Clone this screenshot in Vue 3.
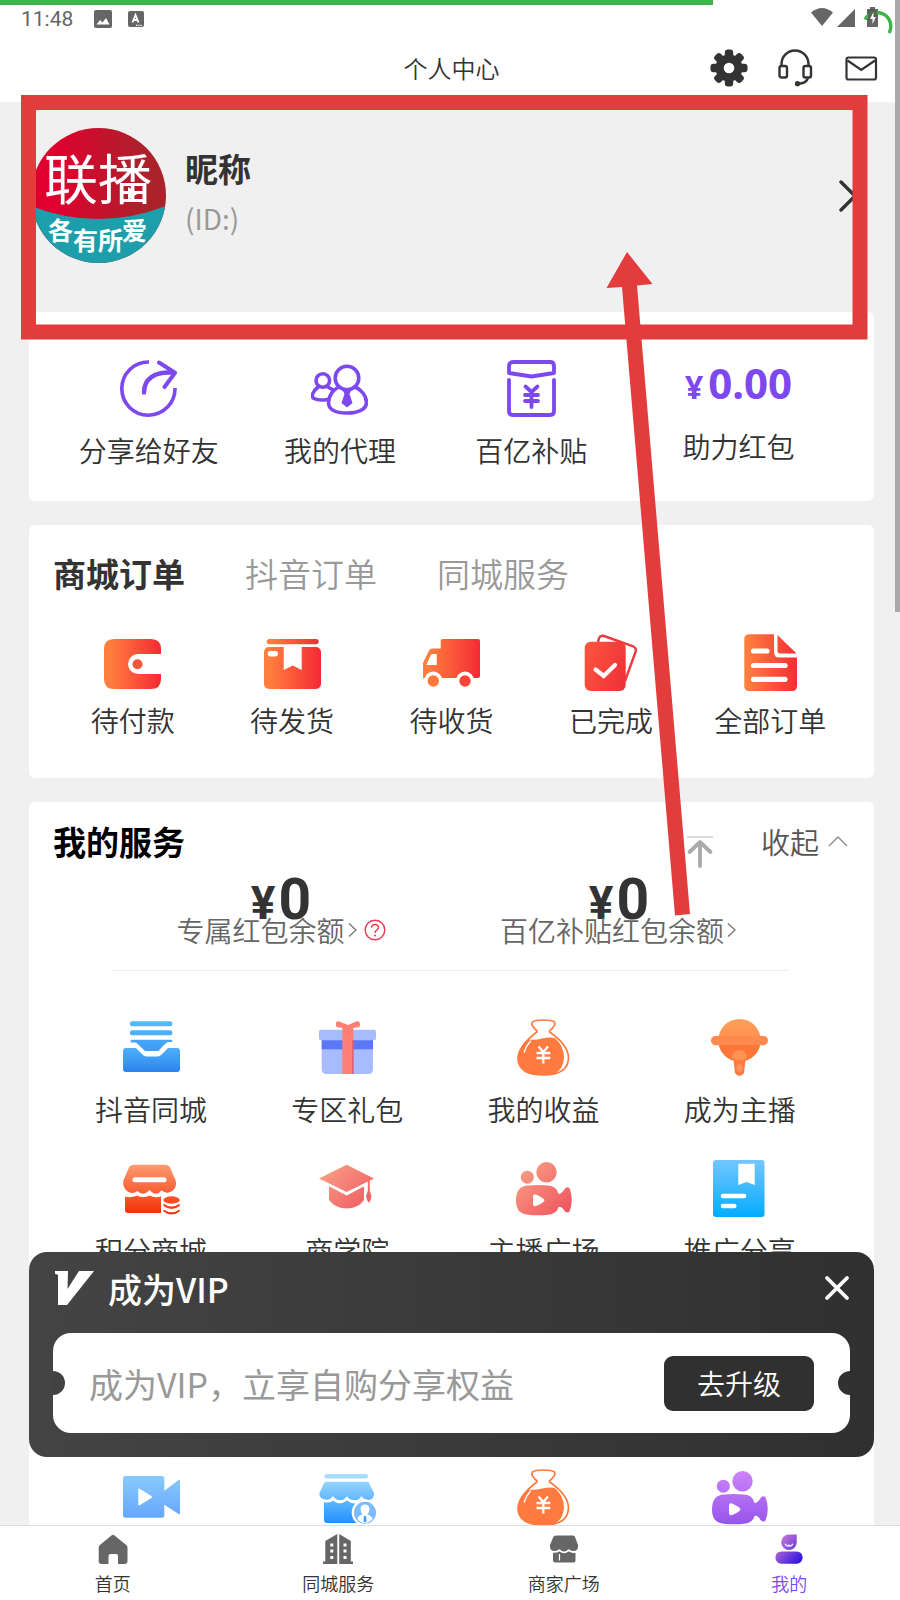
<template>
  <div class="app">
    <svg class="defs" width="0" height="0" aria-hidden="true">
      <defs>
        <linearGradient id="g-order" gradientUnits="userSpaceOnUse" x1="0" y1="0" x2="57" y2="0">
          <stop offset="0.1" stop-color="#ff7e3d" />
          <stop offset="1" stop-color="#f42a34" />
        </linearGradient>
        <linearGradient id="g-done" gradientUnits="userSpaceOnUse" x1="0" y1="0" x2="57" y2="20">
          <stop offset="0" stop-color="#ff5a3e" />
          <stop offset="1" stop-color="#ee2f38" />
        </linearGradient>
        <linearGradient id="g-blue" gradientUnits="userSpaceOnUse" x1="0" y1="0" x2="0" y2="57">
          <stop offset="0" stop-color="#58bdff" />
          <stop offset="1" stop-color="#2b7fea" />
        </linearGradient>
        <linearGradient id="g-tray" gradientUnits="userSpaceOnUse" x1="0" y1="28" x2="0" y2="54">
          <stop offset="0" stop-color="#4fb3fc" />
          <stop offset="1" stop-color="#2c80ea" />
        </linearGradient>
        <linearGradient id="g-book" gradientUnits="userSpaceOnUse" x1="0" y1="0" x2="0" y2="57">
          <stop offset="0" stop-color="#74c6ff" />
          <stop offset="1" stop-color="#04abff" />
        </linearGradient>
        <linearGradient id="g-video" gradientUnits="userSpaceOnUse" x1="0" y1="5" x2="0" y2="50">
          <stop offset="0" stop-color="#8accfd" />
          <stop offset="1" stop-color="#64a5fd" />
        </linearGradient>
        <linearGradient id="g-store" gradientUnits="userSpaceOnUse" x1="0" y1="4" x2="0" y2="54">
          <stop offset="0" stop-color="#aee3ff" />
          <stop offset="1" stop-color="#2191ff" />
        </linearGradient>
        <linearGradient id="g-mall" gradientUnits="userSpaceOnUse" x1="0" y1="4" x2="0" y2="54">
          <stop offset="0" stop-color="#fd9c72" />
          <stop offset="1" stop-color="#f23005" />
        </linearGradient>
        <linearGradient id="g-host" gradientUnits="userSpaceOnUse" x1="0" y1="0" x2="0" y2="57">
          <stop offset="0" stop-color="#ffa05c" />
          <stop offset="1" stop-color="#ff7438" />
        </linearGradient>
        <linearGradient id="g-coral" gradientUnits="userSpaceOnUse" x1="5" y1="5" x2="52" y2="52">
          <stop offset="0" stop-color="#f9a085" />
          <stop offset="1" stop-color="#ef5660" />
        </linearGradient>
        <linearGradient id="g-violet" gradientUnits="userSpaceOnUse" x1="0" y1="0" x2="0" y2="57">
          <stop offset="0" stop-color="#cf86fa" />
          <stop offset="1" stop-color="#9553ea" />
        </linearGradient>
        <linearGradient id="g-me" gradientUnits="userSpaceOnUse" x1="2" y1="4" x2="26" y2="26">
          <stop offset="0" stop-color="#cf80d8" />
          <stop offset="0.5" stop-color="#8a4fd6" />
          <stop offset="1" stop-color="#3a18e0" />
        </linearGradient>
        <linearGradient id="g-logo" x1="0" y1="0" x2="1" y2="0">
          <stop offset="0.15" stop-color="#e0002f" />
          <stop offset="0.85" stop-color="#ac222b" />
        </linearGradient>

        <symbol id="i-share" viewBox="0 0 57 57">
          <g fill="none" stroke="#7d48ee" stroke-width="4" stroke-linecap="round" stroke-linejoin="round">
            <path d="M29 2A26.6 26.6 0 1 0 55 28" stroke-width="3.6" stroke-linecap="butt" />
            <path d="M39 2.5L55 12.7L44.5 27" />
            <path d="M24 32.5C24 19 34 11.5 53 12.7" stroke-width="4.6" />
          </g>
        </symbol>
        <symbol id="i-agent" viewBox="0 0 57 57">
          <g fill="none" stroke="#7d48ee" stroke-width="3.6" stroke-linecap="round">
            <circle cx="36" cy="18" r="11.8" />
            <circle cx="11.8" cy="20.5" r="6.8" />
            <path d="M27 27.500C23 29.500 17.500 35 17.500 43C18 51 26 53 36 53S55 50 55.500 43C55.500 35 49.500 29.500 45 27.500" />
            <path d="M7 27C1 32 0 37 3 38.5Q8 41 16 39.5M17 27L22 30" />
          </g>
          <path d="M31 29H41L38.500 34L41.500 43L36 47.500L30.500 43L33.500 34Z" fill="#7d48ee" />
        </symbol>
        <symbol id="i-subsidy" viewBox="0 0 57 57">
          <g fill="none" stroke="#7d48ee" stroke-width="3.8" stroke-linecap="round" stroke-linejoin="round">
            <path d="M6 13V6Q6 2 10 2H47Q51 2 51 6V13L28.500 16.500Z" />
            <path d="M6 20V51Q6 55 10 55H47Q51 55 51 51V20" />
            <path d="M22.500 26.500L28.500 32L34.500 26.500M28.500 32V47M22 35H35M22 41H35" />
          </g>
        </symbol>

        <symbol id="i-pay" viewBox="0 0 57 57">
          <path d="M10 5H47Q57 5 57 15V20H34A10 10 0 0 0 34 40H57V45Q57 55 47 55H10Q0 55 0 45V15Q0 5 10 5Z" fill="url(#g-order)" />
          <circle cx="33.500" cy="30.200" r="5" fill="#f95339" />
        </symbol>
        <symbol id="i-ship" viewBox="0 0 57 57">
          <rect x="2.700" y="5" width="52" height="5.200" rx="2.600" fill="url(#g-order)" />
          <rect y="13" width="57" height="42" rx="5" fill="url(#g-order)" />
          <path d="M19.700 12H37.700V36L28.700 31.500L19.700 36Z" fill="#fff" />
          <rect x="3.700" y="17" width="10.300" height="5.500" rx="2.700" fill="#fff" />
        </symbol>
        <symbol id="i-receive" viewBox="0 0 57 57">
          <path d="M20 5H55Q57 5 57 7V42Q57 44 55 44H0V29L6 16.500Q7 14.500 9.500 14.500H17.700V7Q17.700 5 20 5Z" fill="url(#g-order)" />
          <path d="M13.700 20H9.500Q8.300 20 7.800 21L3.300 31H13.700Z" fill="#fff" />
          <circle cx="10.300" cy="46.500" r="9" fill="#fff" />
          <circle cx="42" cy="46.500" r="9" fill="#fff" />
          <circle cx="10.300" cy="47" r="5.700" fill="#ff773d" />
          <circle cx="42" cy="47" r="5.700" fill="#f94438" />
        </symbol>
        <symbol id="i-done" viewBox="0 0 57 57">
          <path d="M16 8L17 4Q18.500 1 22 2L50.500 12Q55 14 53.500 18L43 47" fill="none" stroke="#ee3a40" stroke-width="2.400" />
          <rect x="2.700" y="7.700" width="41" height="49.300" rx="6" fill="url(#g-done)" />
          <path d="M13.500 35.500L21.700 42L33 31" fill="none" stroke="#fff" stroke-width="4.200" stroke-linecap="round" />
        </symbol>
        <symbol id="i-all" viewBox="0 0 57 57">
          <path d="M7.300 0.300H32V18Q32 23.500 37 23.500H55V52Q55 57 50 57H7.300Q2.300 57 2.300 52V5.300Q2.300 0.300 7.300 0.300Z" fill="url(#g-order)" />
          <path d="M35.500 1L54.500 19.500H38Q35.500 19.500 35.500 17Z" fill="url(#g-order)" />
          <path d="M11.500 17H25M11.500 31.500H43M11.500 45.300H43" stroke="#fff" stroke-width="5.200" stroke-linecap="round" />
        </symbol>

        <symbol id="i-local" viewBox="0 0 57 57">
          <g fill="url(#g-blue)">
            <rect x="7" y="2.300" width="42.300" height="5" rx="2" />
            <rect x="7" y="11.300" width="42.300" height="5" rx="2" />
            <path d="M8.500 20.700H48Q49.500 20.700 49.300 23H45Q42 24 36 31.500Q35 32 34 32H22Q18 28 13 23.500H8Q6.500 22 8.500 20.700Z" />
          </g>
          <path d="M3 29H13L20 36Q22 37.500 24 37.500H34Q36 37.500 38 36L45 29H54Q57 29 57 32V50Q57 53 54 53H3Q0 53 0 50V32Q0 29 3 29Z" fill="url(#g-tray)" />
        </symbol>
        <symbol id="i-gift" viewBox="0 0 57 57">
          <path d="M2.700 21H54V50Q54 55 49 55H7.700Q2.700 55 2.700 50Z" fill="#a8bbff" />
          <rect x="2.700" y="21" width="51.300" height="9.300" fill="#5b78f6" />
          <rect y="10.700" width="57" height="10.600" rx="2" fill="#a8bbff" />
          <path d="M23.300 9L17.500 8Q15.500 2 19.500 2.200L29 6L37.500 2.200Q42.500 2 40.500 8L34.300 9V55H23.300Z" fill="#ff7f75" />
          <path d="M33.300 21V55H34.600V21Z" fill="#d95b6d" />
        </symbol>
        <symbol id="i-income" viewBox="0 0 57 57">
          <g fill="none" stroke="#ff7a3f" stroke-width="1.700">
            <path d="M22.500 12.500Q15 6 17.500 3Q20 1 28.500 1T39.500 3Q41.500 6 34 12.500" />
            <path d="M22.500 12.500Q3 27 3 40Q4 56 28.500 56T53.500 39Q53.500 26 34 12.500" />
          </g>
          <path d="M13 20.500Q20 21.500 27 19.500Q36 17.500 40.500 19.500Q49 28 49 38Q48 53 36 56H22Q4 55 3 39Q4 29 13 20.500Z" fill="#ff7a3f" />
          <path d="M15.500 22Q11 27 9.300 33" fill="none" stroke="#fff" stroke-width="1.400" stroke-linecap="round" />
          <path d="M23.500 27.500L28.300 33L33 27.500M28.300 33V44.500M21.500 34H35.300M21.500 39H35.300" fill="none" stroke="#fff" stroke-width="2.300" />
        </symbol>
        <symbol id="i-host" viewBox="0 0 57 57">
          <circle cx="28.500" cy="21.300" r="21.300" fill="url(#g-host)" />
          <rect y="17" width="57" height="9.300" rx="4.600" fill="#ff8a4d" />
          <path d="M8 26Q12 41 28.500 42.500Q45 41 49 26Z" fill="#ff7639" />
          <path d="M22.500 41H34.500L33 54Q31 57 28.500 57T24 54Z" fill="#ff7a42" />
          <path d="M21 39Q22 31 28.500 31T36 39Q28 44 21 39Z" fill="#ff9354" />
          <ellipse cx="28.500" cy="49" rx="3" ry="4" fill="#ff915c" />
        </symbol>
        <symbol id="i-mall" viewBox="0 0 57 57">
          <g fill="url(#g-mall)">
            <path d="M11 4.700H42Q45.500 4.700 47 7.500L52.500 20Q54.500 27 49 31Q44 34.500 38.500 30.500Q33 37 26.500 30Q20 37 14.500 31Q9 35 4 31Q-1 27 0.500 20L6 7.500Q7.500 4.700 11 4.700Z" />
            <path d="M2 36.700Q9 38 14 35.500Q20 38.500 26.500 35.500Q32 38.500 38 36.500V53H5Q2 53 2 50Z" />
            <ellipse cx="48.500" cy="40" rx="8.200" ry="3.700" />
            <path d="M40.500 43.500Q48.500 49.500 56.700 43.500V46Q48.500 52 40.500 46ZM40.500 49.500Q48.500 55 56.700 49.500V51.500Q48.500 57.500 40.500 51.500Z" />
          </g>
          <path d="M12 19.700H41" stroke="#fff" stroke-width="5" stroke-linecap="round" />
        </symbol>
        <symbol id="i-school" viewBox="0 0 57 57">
          <g fill="url(#g-coral)">
            <path d="M27.700 4.700L55 18.500L27.700 32L0 18.500Z" />
            <path d="M10 26.300L27.700 35.500L45 26.300V40Q39 48.500 27.700 48.500T10 40Z" />
            <path d="M48.800 20H50.800V31L52.500 36Q52 40 49.800 43Q47.500 40 47 36L48.800 31Z" />
          </g>
        </symbol>
        <symbol id="i-camera" viewBox="0 0 57 57">
          <circle cx="12.300" cy="17.200" r="6.500" />
          <circle cx="31.500" cy="12.200" r="10.200" />
          <path d="M13 25.500Q23 24.500 33 25.500Q42 26 43.500 34Q46.500 34 50 28.500Q52 26.500 54.500 28Q59 40 54.500 51.500Q52 53.500 49.500 51Q46.500 46 43.500 47Q42 54 33 54.700Q23 55.700 13 54.700Q1 54 1 40.500Q1 26 13 25.500Z" />
          <path d="M18 36Q18.500 33.500 21 34.500Q29 38 29.500 40.300Q29 43 21 46Q18.500 47 18 44.500Z" fill="#fff" />
        </symbol>
        <symbol id="i-promote" viewBox="0 0 57 57">
          <rect x="2" width="51.500" height="57" rx="3" fill="url(#g-book)" />
          <path d="M27.300 3.700H43.700V25L35.500 22L27.300 25Z" fill="#fff" />
          <path d="M12 36H33M12 46H23.300" stroke="#fff" stroke-width="4.600" stroke-linecap="round" />
        </symbol>
        <symbol id="i-video" viewBox="0 0 57 57">
          <rect y="7" width="41.300" height="41.700" rx="2.500" fill="url(#g-video)" />
          <path d="M41 22L55.500 11Q57 10 57 12V44Q57 46 55.500 45L41 35.500Z" fill="url(#g-video)" />
          <path d="M15.300 20.500Q15.300 19 17 20L28.500 27Q29.500 28 28.500 29L17 36Q15.300 37 15.300 35.500Z" fill="#fff" />
        </symbol>
        <symbol id="i-store" viewBox="0 0 57 57">
          <g fill="url(#g-store)">
            <rect x="5.300" y="5" width="43.700" height="4.500" rx="2" />
            <path d="M6 12.700H48.500Q49.500 12.700 50 14L55 24Q55.500 30 50 31Q45 31 42.500 27Q39 32.500 34.500 31Q30 31 28 27Q25 32 20.500 31Q16.500 31 14 27Q11 31.500 6 30.500Q-0.500 29 0.500 24L5 14Z" />
            <path d="M5 33Q11 34.500 14 31.500Q20.500 37 28 31.500Q35 37 42 32V54H8Q5 54 5 51Z" />
          </g>
          <circle cx="46" cy="43.700" r="13.300" fill="#fff" />
          <circle cx="46" cy="43.700" r="11" fill="#7bbcff" />
          <path d="M38.500 50Q39 46.500 43.500 45.500Q41.500 43 41.500 39.500Q42 35.500 46 35.500T50.500 39.500Q50.500 43 48.500 45.500Q53 46.500 53.500 50Q50 54 46 54T38.500 50Z" fill="#fff" />
          <path d="M45 47H47L47.600 52L46 53.500L44.400 52Z" fill="#3f9cff" />
        </symbol>

        <symbol id="i-home" viewBox="0 0 30 30">
          <path d="M13.800 1.200Q15 0.200 16.200 1.200L28.300 11Q29.500 12 29.500 13.500V27Q29.500 30 26.500 30H20V22Q20 20 18 20H12.500Q10.500 20 10.500 22V30H3.500Q0.700 30 0.700 27V13.500Q0.700 12 1.900 11Z" fill="#666" />
        </symbol>
        <symbol id="i-city" viewBox="0 0 30 30">
          <path d="M2.300 7L14.300 0V30H0V27.500H2.300ZM16.200 0L27.800 7V27.500H30V30H16.200Z" fill="#666" />
          <path d="M7.300 9.500H10.300V12.500H7.300ZM7.300 15.500H10.300V18.500H7.300ZM7.300 22H10.300V25H7.300ZM20.500 9.500H23.500V12.500H20.500ZM20.500 15.500H23.500V18.500H20.500ZM20.500 22H23.500V25H20.500Z" fill="#fff" />
        </symbol>
        <symbol id="i-market" viewBox="0 0 30 30">
          <path d="M7 1.500H24Q25.500 1.500 26 3L29 11Q29.500 17 24.500 17Q21.500 17 19.700 15Q15 20 10.500 15Q8.500 17 5.500 17Q0.500 17 1 11L4.300 3Q5 1.500 7 1.500Z" fill="#666" />
          <path d="M4 18.700Q8 19 10.500 17.500Q15 21 19.700 17.500Q23 19.500 26.500 18.700V26.500Q26.500 28.500 24.500 28.500H6Q4 28.500 4 26.500Z" fill="#666" />
          <path d="M10.500 20V26.500" stroke="#fff" stroke-width="1.200" />
        </symbol>
        <symbol id="i-me" viewBox="0 0 30 31">
          <path d="M15 0.500H23V8.500A8 8 0 1 1 15 0.500Z" fill="url(#g-me)" />
          <path d="M11 10Q13 14 15 11.500Q17 14 19 10" fill="none" stroke="#fff" stroke-width="1.300" />
          <rect x="1" y="18" width="28" height="12.700" rx="6" fill="url(#g-me)" />
        </symbol>
      </defs>
    </svg>

    <header class="top">
      <div class="progress" :style="{ width: progress + '%' }"></div>
      <div class="status">
        <span class="time">11:48</span>
        <svg class="note-image" viewBox="0 0 18 18" width="18" height="18">
          <rect width="18" height="18" rx="2" fill="#666" />
          <path d="M2.500 14.500L6 10L8.500 12.500L12 8L15.500 14.500Z" fill="#fff" />
        </svg>
        <svg class="note-input" viewBox="0 0 16 16" width="16" height="16">
          <rect width="16" height="16" rx="2" fill="#666" />
          <path d="M4.500 11.500L7.500 4L10.500 11.500M5.500 9H9.500" fill="none" stroke="#fff" stroke-width="1.900" />
          <path d="M8 14.300H14" stroke="#fff" stroke-width="1.300" stroke-dasharray="1.300 1" />
        </svg>
        <svg class="signals" viewBox="0 0 84 30" width="84" height="30">
          <path d="M1 8.500Q12 -0.500 23 8.500L12 22Z" fill="#666" />
          <path d="M45 5V23H27Z" fill="#666" />
          <path d="M60 3H65V5H68V23H57V5H60Z" fill="#666" />
          <path d="M55 15.500A13.500 13.500 0 0 1 79 29" fill="none" stroke="#3db34a" stroke-width="3.400" />
          <path d="M60 5H65V7H67V16H58V7H60Z" fill="#555" opacity="0.700" />
          <path d="M63.500 8L60 15H62.500V20L66 13H63.500Z" fill="#fff" />
        </svg>
      </div>
      <nav class="navbar">
        <h1>个人中心</h1>
        <div class="actions">
          <button type="button" aria-label="设置">
            <svg viewBox="0 0 38 38" width="38" height="38">
              <g fill="#333">
                <circle cx="19" cy="19" r="13.500" />
                <rect v-for="n in 8" :key="n" x="14.800" y="0.500" width="8.400" height="11" rx="3" :transform="`rotate(${n * 45} 19 19)`" />
              </g>
              <circle cx="19" cy="19" r="5.300" fill="#fff" />
            </svg>
          </button>
          <button type="button" aria-label="客服">
            <svg viewBox="0 0 38 38" width="38" height="38" fill="none" stroke="#333" stroke-width="2.400">
              <path d="M5.500 17.500V15A13.500 13.500 0 0 1 32.500 15V17.500" />
              <rect x="3.500" y="17" width="7.500" height="11.500" rx="2" />
              <rect x="27.500" y="17" width="7.500" height="11.500" rx="2" />
              <path d="M32 28.500Q31 34.500 22 34.700" />
              <circle cx="21.500" cy="34.700" r="1.400" fill="#333" />
            </svg>
          </button>
          <button type="button" aria-label="消息">
            <svg viewBox="0 0 38 38" width="38" height="38" fill="none" stroke="#333" stroke-width="2.200">
              <rect x="4.500" y="8.500" width="29.500" height="22" rx="2" />
              <path d="M5.500 11.500L19.200 21L33 11.500" />
            </svg>
          </button>
        </div>
      </nav>
    </header>

    <main class="page">
      <a class="profile" href="#">
        <svg class="avatar" viewBox="0 0 135 135" width="135" height="135">
          <clipPath id="avatar-clip"><circle cx="67.500" cy="67.500" r="67.500" /></clipPath>
          <g clip-path="url(#avatar-clip)">
            <rect width="135" height="135" fill="url(#g-logo)" />
            <path d="M0 78Q67 104 135 78V135H0Z" fill="#1c9faa" />
          </g>
          <g fill="#fff">
            <text class="brand" x="13" y="72" font-size="54">联播</text>
            <g class="slogan" font-size="25">
              <text x="17" y="112">各</text>
              <text x="42" y="122">有</text>
              <text x="67" y="122">所</text>
              <text x="91" y="112">爱</text>
            </g>
          </g>
          <path d="M97 59L107 65.500L97 72Z" fill="#fff" />
        </svg>
        <div class="who">
          <p class="name">昵称</p>
          <p class="uid">(ID:)</p>
        </div>
        <svg class="go" viewBox="0 0 18 32" width="18" height="32">
          <path d="M2 2L16 16L2 30" fill="none" stroke="#333" stroke-width="3.400" stroke-linecap="round" />
        </svg>
      </a>

      <section class="card quick">
        <a v-for="item in quick" :key="item.label" class="cell wide" href="#">
          <svg class="icon"><use :href="'#i-' + item.icon" /></svg>
          <span>{{ item.label }}</span>
        </a>
        <a class="cell wide" href="#">
          <strong class="money"><small>¥</small>0.00</strong>
          <span>助力红包</span>
        </a>
      </section>

      <section class="card orders">
        <div class="tabs" role="tablist">
          <button
            v-for="(tab, i) in orderTabs"
            :key="tab"
            type="button"
            role="tab"
            :aria-selected="i === activeTab"
            :class="{ active: i === activeTab }"
            @click="activeTab = i"
          >{{ tab }}</button>
        </div>
        <div class="order-list">
          <a v-for="item in orders" :key="item.label" class="cell" href="#">
            <svg class="icon"><use :href="'#i-' + item.icon" /></svg>
            <span>{{ item.label }}</span>
          </a>
        </div>
      </section>

      <section class="card services">
        <div class="services-head">
          <h2>我的服务</h2>
          <button type="button">
            收起
            <svg viewBox="0 0 20 12" width="20" height="12">
              <path d="M1 11L10 2L19 11" fill="none" stroke="#888" stroke-width="1.400" />
            </svg>
          </button>
        </div>
        <div class="balances">
          <a v-for="item in balances" :key="item.label" href="#">
            <strong><small>¥</small>0</strong>
            <span class="balance-label">
              {{ item.label }}
              <svg viewBox="0 0 14 16" width="14" height="16">
                <path d="M4 1.500L11 8L4 14.500" fill="none" stroke="#777" stroke-width="1.300" />
              </svg>
              <svg v-if="item.help" class="help" viewBox="0 0 22 22" width="22" height="22">
                <circle cx="11" cy="11" r="9.800" fill="none" stroke="#ee3c55" stroke-width="1.400" />
                <path d="M7.500 8.700Q7.700 5.500 11 5.500T14.500 8.500Q14.500 10 12.700 11.200Q11 12.300 11 14" fill="none" stroke="#ee3c55" stroke-width="1.400" />
                <circle cx="11" cy="16.500" r="1" fill="#ee3c55" />
              </svg>
            </span>
          </a>
        </div>
        <div class="service-list">
          <a v-for="item in services" :key="item.label" class="cell wide" href="#">
            <svg class="icon" :fill="item.fill"><use :href="'#i-' + item.icon" /></svg>
            <span>{{ item.label }}</span>
          </a>
        </div>
        <div class="service-list more">
          <a v-for="item in moreServices" :key="item.icon" class="cell" href="#">
            <svg class="icon" :fill="item.fill"><use :href="'#i-' + item.icon" /></svg>
          </a>
        </div>
      </section>
    </main>

    <button class="back-top" type="button" aria-label="返回顶部">
      <svg viewBox="0 0 28 32" width="28" height="32">
        <path d="M1 1H27" stroke="#ccc" stroke-width="1.400" />
        <path d="M3.500 16L14 6L24.500 16M14 7V30" fill="none" stroke="#aaa" stroke-width="3.800" stroke-linecap="round" stroke-linejoin="round" />
      </svg>
    </button>

    <aside v-if="showVip" class="vip">
      <div class="vip-head">
        <svg viewBox="0 0 42 36" width="42" height="36">
          <path d="M2 1H15L14.500 19L26 1H41L14 35H5L5 5Q4 4 2 4Z" fill="#fff" />
        </svg>
        <h2>成为VIP</h2>
        <button type="button" aria-label="关闭" @click="showVip = false">
          <svg viewBox="0 0 26 26" width="26" height="26">
            <path d="M3 3L23 23M23 3L3 23" stroke="#fff" stroke-width="3.800" stroke-linecap="round" />
          </svg>
        </button>
      </div>
      <div class="ticket">
        <p>成为VIP，立享自购分享权益</p>
        <button type="button">去升级</button>
      </div>
    </aside>

    <nav class="tabbar">
      <a v-for="item in tabbar" :key="item.label" href="#" :class="{ current: item.icon === 'me' }">
        <svg><use :href="'#i-' + item.icon" /></svg>
        <span>{{ item.label }}</span>
      </a>
    </nav>

    <div class="scrollbar"></div>

    <svg class="marks" viewBox="0 0 900 1600" width="900" height="1600" aria-hidden="true">
      <rect x="28.500" y="102.500" width="831.500" height="229.500" fill="none" stroke="#e33c3d" stroke-width="15" />
      <path d="M627 252L652.500 284L637 285.500L690 914L675 915.500L622 287L606.500 288Z" fill="#e33c3d" />
    </svg>
  </div>
</template>

<script setup>
import { ref } from 'vue'

const progress = 79.2
const activeTab = ref(0)
const showVip = ref(true)

const quick = [
  { icon: 'share', label: '分享给好友' },
  { icon: 'agent', label: '我的代理' },
  { icon: 'subsidy', label: '百亿补贴' },
]

const orderTabs = ['商城订单', '抖音订单', '同城服务']

const orders = [
  { icon: 'pay', label: '待付款' },
  { icon: 'ship', label: '待发货' },
  { icon: 'receive', label: '待收货' },
  { icon: 'done', label: '已完成' },
  { icon: 'all', label: '全部订单' },
]

const balances = [
  { label: '专属红包余额', help: true },
  { label: '百亿补贴红包余额', help: false },
]

const services = [
  { icon: 'local', label: '抖音同城' },
  { icon: 'gift', label: '专区礼包' },
  { icon: 'income', label: '我的收益' },
  { icon: 'host', label: '成为主播' },
  { icon: 'mall', label: '积分商城' },
  { icon: 'school', label: '商学院' },
  { icon: 'camera', label: '主播广场', fill: 'url(#g-coral)' },
  { icon: 'promote', label: '推广分享' },
]

const moreServices = [
  { icon: 'video' },
  { icon: 'store' },
  { icon: 'income' },
  { icon: 'camera', fill: 'url(#g-violet)' },
]

const tabbar = [
  { icon: 'home', label: '首页' },
  { icon: 'city', label: '同城服务' },
  { icon: 'market', label: '商家广场' },
  { icon: 'me', label: '我的' },
]
</script>

<style>
body {
  margin: 0;
  background: #f0f0f0;
}
</style>

<style scoped>
.app {
  position: relative;
  display: flex;
  flex-direction: column;
  height: 100vh;
  overflow: hidden;
  background: #f0f0f0;
  color: #333;
  font-family: "Noto Sans CJK SC", sans-serif;
  font-weight: 350;
}

.app * {
  box-sizing: border-box;
}

a {
  color: inherit;
  text-decoration: none;
}

h1,
h2,
p {
  margin: 0;
}

button {
  padding: 0;
  border: 0;
  background: none;
  color: inherit;
  font: inherit;
  cursor: pointer;
}

svg {
  display: block;
  flex-shrink: 0;
}

.defs {
  position: absolute;
}

.top {
  position: relative;
  flex-shrink: 0;
  background: #fff;
}

.progress {
  position: absolute;
  top: 0;
  left: 0;
  height: 5px;
  background: #3db34a;
}

.status {
  display: flex;
  align-items: center;
  height: 38px;
  padding: 0 6px 0 21px;
  color: #666;
  font-family: Roboto, sans-serif;
  font-size: 21px;
  font-weight: 400;
}

.note-image {
  margin-left: 21px;
}

.note-input {
  margin-left: 16px;
}

.signals {
  margin-left: auto;
}

.navbar {
  position: relative;
  height: 64px;
  padding-left: 3px;
  line-height: 60px;
  text-align: center;
}

.navbar h1 {
  font-size: 24px;
  font-weight: 350;
}

.actions {
  position: absolute;
  top: 11px;
  right: 20px;
  display: flex;
  gap: 28px;
}

.page {
  flex: 1;
  min-height: 0;
  margin-right: -3px;
  padding: 0 29px;
  overflow: hidden;
}

.profile {
  display: flex;
  align-items: flex-start;
  height: 210px;
  padding: 26px 17px 0 2px;
}

.who {
  flex: 1;
  padding: 15px 0 0 19px;
  line-height: 50px;
}

.name {
  font-size: 33px;
  font-weight: 700;
}

.uid {
  color: #999;
  font-size: 28px;
  font-weight: 400;
}

.go {
  margin-top: 52px;
}

.brand {
  font-weight: 400;
}

.slogan {
  font-weight: 700;
}

.card {
  margin-bottom: 24px;
  border-radius: 6px;
  background: #fff;
}

.cell {
  display: flex;
  flex-direction: column;
  align-items: center;
  gap: 9px;
  font-size: 28px;
  line-height: 40px;
  white-space: nowrap;
}

.cell.wide {
  gap: 13px;
}

.icon {
  width: 57px;
  height: 57px;
}

.quick {
  display: grid;
  grid-template-columns: repeat(3, 1fr) 223px;
  padding: 48px 24px 31px;
}

.money {
  height: 53px;
  color: #7d48ee;
  font-family: "Noto Sans", sans-serif;
  font-size: 42px;
  font-weight: 700;
  line-height: 45px;
}

.money small {
  margin-right: 5px;
  font-size: 32px;
}

.orders {
  padding: 23px 24px 38px;
}

.tabs {
  display: flex;
  gap: 60px;
  margin-bottom: 36px;
  font-size: 33px;
  line-height: 50px;
}

.tabs button {
  color: #999;
}

.tabs .active {
  color: #333;
  font-weight: 700;
}

.order-list {
  display: grid;
  grid-template-columns: repeat(5, 1fr);
}

.services {
  padding: 14px 24px 24px;
}

.services-head {
  display: flex;
  justify-content: space-between;
  line-height: 50px;
}

.services-head h2 {
  color: #000;
  font-size: 33px;
  font-weight: 700;
}

.services-head button {
  display: flex;
  align-items: center;
  gap: 9px;
  padding-right: 2px;
  color: #555;
  font-size: 29px;
}

.balances {
  display: grid;
  grid-template-columns: 1fr 1fr;
  margin: 0 62px 48px 59px;
  padding-bottom: 20px;
  border-bottom: 1px solid #eee;
}

.balances a {
  display: flex;
  flex-direction: column;
  align-items: center;
}

.balances strong {
  margin-bottom: -27px;
  font-family: Roboto, sans-serif;
  font-size: 57px;
  font-weight: 700;
  line-height: 68px;
}

.balances small {
  margin-right: 3px;
  font-size: 46px;
}

.balance-label {
  display: flex;
  align-items: center;
  color: #666;
  font-size: 28px;
  line-height: 40px;
  white-space: nowrap;
}

.help {
  margin-left: 5px;
}

.service-list {
  display: grid;
  grid-template-columns: repeat(4, 1fr);
  row-gap: 31px;
  padding-right: 12px;
}

.more {
  margin-top: 199px;
}

.back-top {
  position: absolute;
  top: 836px;
  right: 186px;
}

.vip {
  position: absolute;
  right: 26px;
  bottom: 143px;
  left: 29px;
  padding: 0 24px 24px;
  border-radius: 18px;
  background: linear-gradient(90deg, #444, #303030);
  color: #fff;
}

.vip-head {
  display: flex;
  align-items: center;
  height: 81px;
  padding-bottom: 9px;
}

.vip-head h2 {
  margin-left: 13px;
  font-size: 34px;
  font-weight: 500;
}

.vip-head button {
  margin-left: auto;
}

.ticket {
  position: relative;
  display: flex;
  align-items: center;
  justify-content: space-between;
  height: 100px;
  padding: 0 36px;
  border-radius: 18px;
  background: #fff;
  color: #999;
  font-size: 34px;
  font-weight: 400;
  overflow: hidden;
}

/* 票券两侧的缺口 */
.ticket::before,
.ticket::after {
  content: '';
  position: absolute;
  top: 38px;
  left: -12px;
  width: 24px;
  height: 24px;
  border-radius: 50%;
  background: #424242;
}

.ticket::after {
  right: -12px;
  left: auto;
  background: #313131;
}

.ticket button {
  width: 150px;
  height: 55px;
  border-radius: 9px;
  background: #303030;
  color: #fff;
  font-size: 28px;
  font-weight: 350;
}

.tabbar {
  display: grid;
  flex-shrink: 0;
  grid-template-columns: repeat(4, 1fr);
  height: 75px;
  margin-right: -2px;
  border-top: 1px solid #ddd;
  background: #fff;
}

.tabbar a {
  display: flex;
  flex-direction: column;
  align-items: center;
  gap: 9px;
  padding-top: 8px;
  font-size: 18px;
  line-height: 20px;
}

.tabbar svg {
  width: 30px;
  height: 30px;
}

.tabbar .current {
  color: #7d48ee;
}

.scrollbar {
  position: absolute;
  top: 0;
  right: 0;
  width: 5px;
  height: 612px;
  background: #a9a9a9;
}

.marks {
  position: absolute;
  top: 0;
  left: 0;
  pointer-events: none;
}
</style>
